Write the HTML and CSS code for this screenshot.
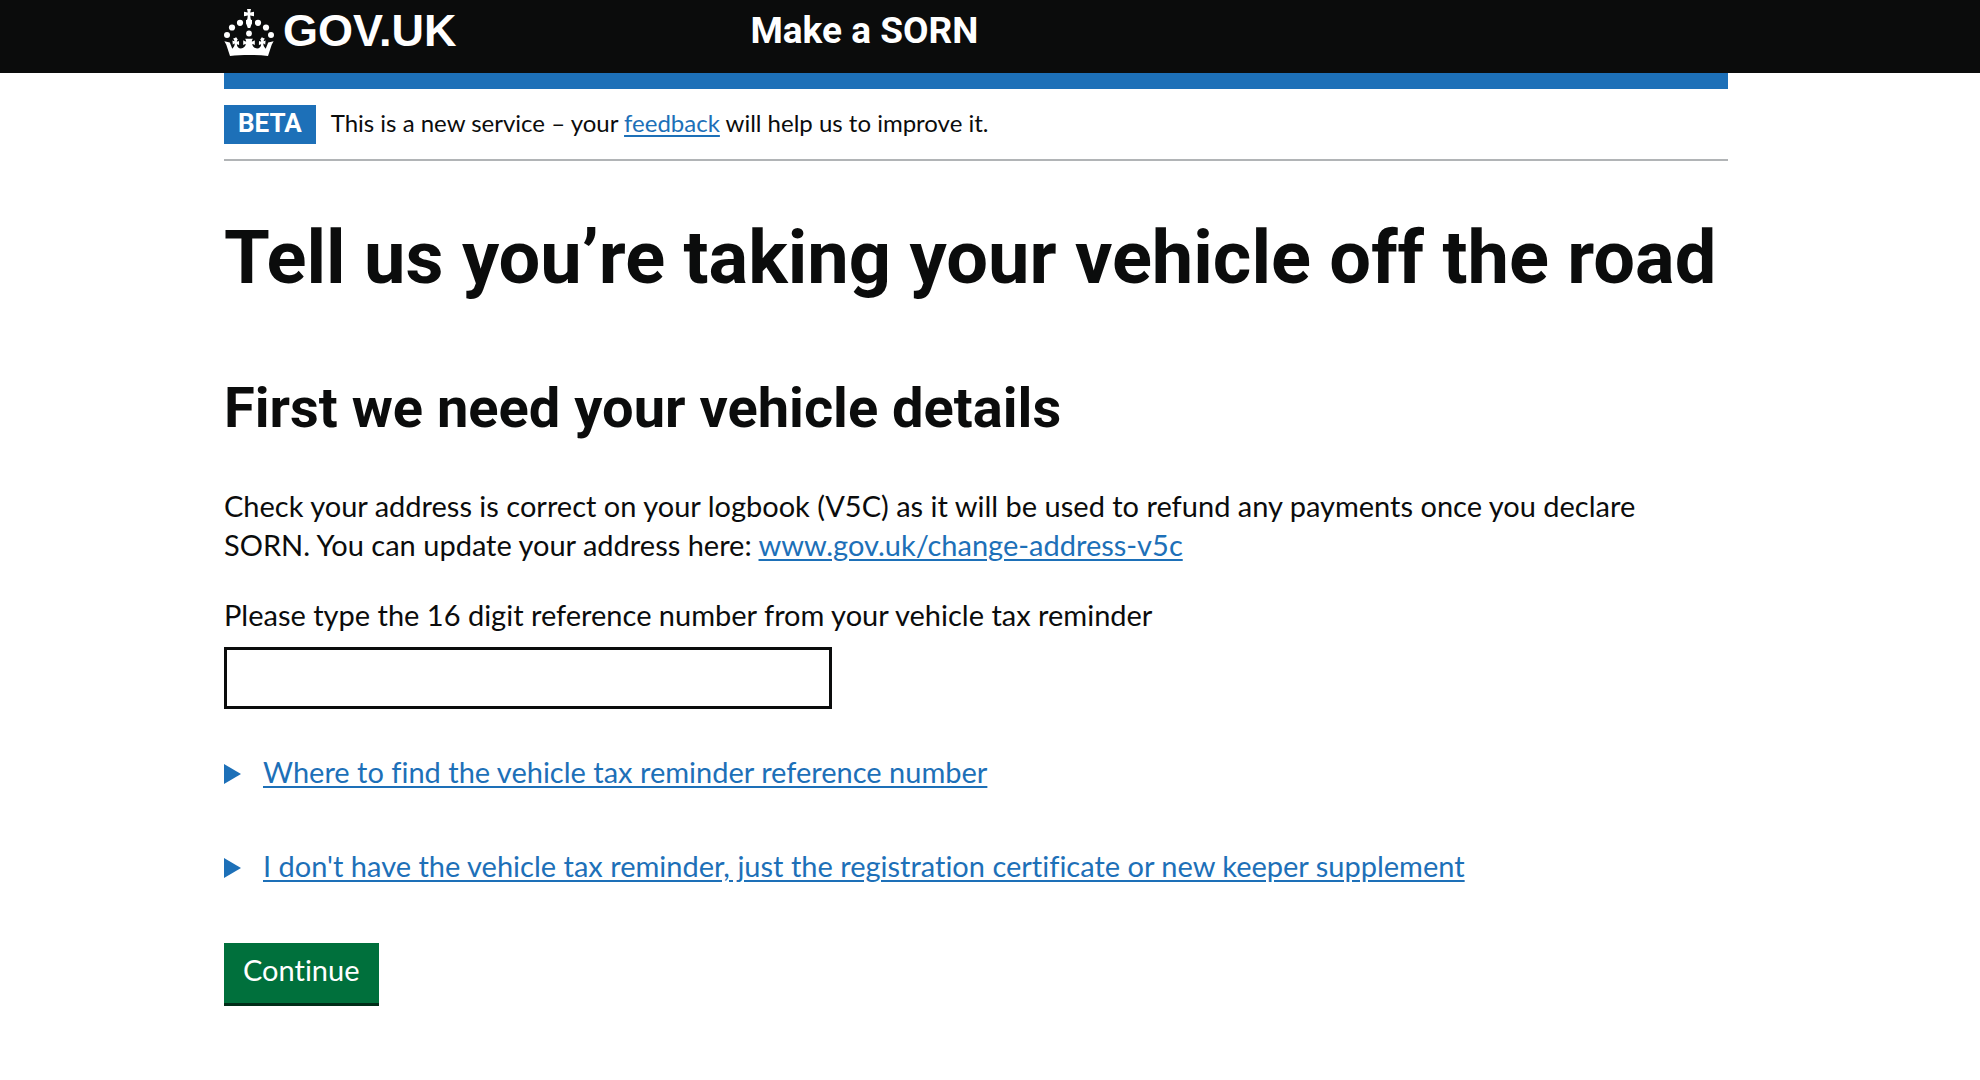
FILE: index.html
```
<!DOCTYPE html>
<html lang="en">
<head>
    <meta charset="UTF-8">
    <meta name="viewport" content="width=device-width, initial-scale=1.0">
    <title>Make a SORN - GOV.UK</title>
    <link rel="stylesheet" href="styles.css">
</head>
<body>
    <header class="header">
        <div class="container header-row">
            <a href="#" class="logo">
                <svg class="crown" viewBox="0 0 50 48" aria-hidden="true">
                    <!-- cross -->
                    <path d="M23 0h4l-.8 3.600 3.800-.8v4.400l-3.800-.8.6 4.600h-3.600l.6-4.600-3.800.8V2.800l3.800.8z"/>
                    <path d="M22 11h6v3l-1.800 5h-2.400L22 14z"/>
                    <!-- arches -->
                    <circle cx="25" cy="13" r="3"/>
                    <circle cx="25" cy="24.500" r="2.900"/>
                    <circle cx="16" cy="13.800" r="3.100"/>
                    <circle cx="34" cy="13.800" r="3.100"/>
                    <circle cx="8" cy="18.500" r="3.100"/>
                    <circle cx="42" cy="18.500" r="3.100"/>
                    <circle cx="3" cy="26" r="3"/>
                    <circle cx="47" cy="26" r="3"/>
                    <!-- base -->
                    <path d="M.4 32.200l5.400 1.300 2.500 6.200c1.600-1.500 2.700-3.700 2.300-5.300-1 .2-1.800 1.300-1.800 1.300l-.4-4.400s1 1 2 .9c-.1-1.700-1.400-2.500-1.400-2.500l3.200-1.500 1.700 2.500s-1.100.3-1.100 1.800c1 .1 2.200-.8 2.200-.8l.1 4.500s-1.200-1.100-2.200-1c-.1 2.400 1.500 4.200 4 4.200 2.800 0 4.500-1.900 4.900-4.300-1.200-.1-2.600 1.200-2.600 1.200v-5s1.700 1.400 3 1.200c0-1.500-1.200-2.700-1.200-2.700h8s-1.200 1.200-1.200 2.700c1.300.2 3-1.200 3-1.200v5s-1.400-1.300-2.600-1.200c.4 2.400 2.100 4.300 4.900 4.300 2.500 0 4.100-1.800 4-4.200-1-.1-2.200 1-2.200 1l.1-4.500s1.200.9 2.200.8c0-1.500-1.100-1.800-1.100-1.800l1.700-2.500 3.200 1.500s-1.300.8-1.400 2.500c1 .1 2-.9 2-.9l-.4 4.400s-.8-1.100-1.800-1.300c-.4 1.600.7 3.800 2.300 5.300l2.500-6.200 5.400-1.300-1.900 3.600L44 47c-12-1.400-26-1.400-38 0L2.300 35.800z"/>
                </svg>
                <span class="logo-text">GOV.UK</span>
            </a>
            <a href="#" class="service-name">Make a SORN</a>
        </div>
    </header>

    <div class="page">
        <div class="container">
            <div class="phase-banner">
                <strong class="tag">BETA</strong>
                <span>This is a new service – your <a href="#">feedback</a> will help us to improve it.</span>
            </div>

            <main class="main">
                <h1>Tell us you’re taking your vehicle off the road</h1>
                <h2>First we need your vehicle details</h2>
                <p>Check your address is correct on your logbook (V5C) as it will be used to refund any payments once you declare SORN. You can update your address here: <a href="#">www.gov.uk/change-address-v5c</a></p>

                <form action="#">
                    <label for="reference">Please type the 16 digit reference number from your vehicle tax reminder</label>
                    <input type="text" id="reference" name="reference" class="input">

                    <details>
                        <summary><span>Where to find the vehicle tax reminder reference number</span></summary>
                    </details>
                    <details>
                        <summary><span>I don't have the vehicle tax reminder, just the registration certificate or new keeper supplement</span></summary>
                    </details>

                    <button type="submit" class="button">Continue</button>
                </form>
            </main>
        </div>
    </div>
</body>
</html>
```
FILE: styles.css
```
*,
*:after,
*:before{
    box-sizing: border-box;
}

body{
    margin: 0;
    font-family: Lato, "Liberation Sans", sans-serif;
    font-size: 29px;
    line-height: 39px;
    font-variant-ligatures: none;
    color: #0b0c0c;
    background-color: #fff;
}

a{
    color: #1d70b8;
    text-underline-offset: 3px;
}

h1,
h2,
.tag,
.service-name{
    font-family: Roboto, "Liberation Sans", sans-serif;
    font-weight: bold;
}

.header,
.page{
    padding: 0 28px 0 0;
}

.header{
    background-color: #0b0c0c;
}

.container{
    max-width: 1504px;
    margin: 0 auto;
}

.header-row{
    display: grid;
    grid-template-columns: 35% 1fr;
    min-height: 73px;
}

.header a{
    color: #fff;
    text-decoration: none;
}

.logo{
    display: flex;
    gap: 9px;
    padding-top: 9px;
}

.crown{
    width: 50px;
    height: 48px;
    fill: #fff;
}

.logo-text{
    font-family: "Liberation Sans", sans-serif;
    font-size: 45px;
    font-weight: bold;
    line-height: 44px;
}

.service-name{
    padding-top: 9px;
    font-size: 37px;
    line-height: 44px;
}

.phase-banner{
    display: flex;
    align-items: baseline;
    gap: 15px;
    padding: 16px 0 15px;
    border-top: 16px solid #1d70b8;
    border-bottom: 2px solid #b1b4b6;
    font-size: 24px;
    line-height: 33px;
}

.tag{
    padding: 2px 14px 4px;
    font-size: 26px;
    color: #fff;
    background-color: #1d70b8;
}

.main{
    padding: 57px 0 48px;
}

h1{
    margin: 0 0 80px;
    font-size: 74px;
    line-height: 80px;
}

h2{
    margin: 0 0 48px;
    font-size: 56px;
    line-height: 60px;
}

p{
    margin: 0 0 31px;
}

label{
    display: block;
    margin-bottom: 13px;
}

.input{
    display: block;
    width: 100%;
    max-width: 608px;
    height: 62px;
    margin-bottom: 43px;
    padding: 6px;
    border: 3px solid #0b0c0c;
    border-radius: 0;
    font: inherit;
}

details{
    margin-bottom: 55px;
}

summary{
    display: flex;
    align-items: center;
    gap: 22px;
    color: #1d70b8;
    cursor: pointer;
}

summary:before{
    content: "";
    margin-top: 4px;
    border-left: 17px solid #1d70b8;
    border-top: 10px solid transparent;
    border-bottom: 10px solid transparent;
}

summary span{
    text-decoration: underline;
    text-underline-offset: 3px;
}

.button{
    display: block;
    margin-top: 58px;
    padding: 7px 19px 14px;
    border: 0;
    border-bottom: 3px solid #002d18;
    font: inherit;
    color: #fff;
    background-color: #00703c;
    cursor: pointer;
}
```
